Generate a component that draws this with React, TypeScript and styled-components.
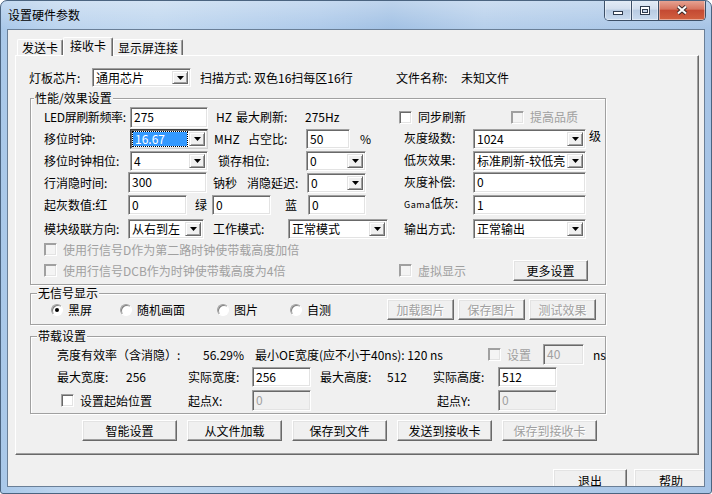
import React from "react";
import styled, { createGlobalStyle } from "styled-components";

const GlobalStyle = createGlobalStyle`
  html, body {
    margin: 0;
    padding: 0;
    background: #ffffff;
  }
  body {
    font-family: "Noto Sans CJK SC", "Liberation Sans", sans-serif;
    font-size: 12px;
    color: #000;
  }
`;

const Win = styled.div`
  width: 712px;
  height: 494px;
  box-sizing: border-box;
  border: 1px solid #4b6480;
  border-radius: 7px 7px 3px 3px;
  background: linear-gradient(180deg, rgba(255, 255, 255, 0.3), rgba(255, 255, 255, 0) 28px),
    linear-gradient(90deg, #a9c8e9 0%, #bcd4ee 8%, #c0d7ef 22%, #aecaea 45%, #a2c1e4 55%, #b6cfeb 68%, #a6c4e6 100%);
  display: flex;
  flex-direction: column;
  overflow: hidden;
`;

const TitleBar = styled.div`
  height: 28px;
  flex: none;
  display: flex;
  align-items: flex-start;
`;

const Title = styled.div`
  padding-left: 7px;
  line-height: 27px;
  font-size: 12px;
  color: #000;
`;

const CaptionGroup = styled.div`
  margin: -1px 5px 0 auto;
  display: flex;
  height: 20px;
  border: 1px solid #3d5068;
  border-top: none;
  border-radius: 0 0 5px 5px;
  overflow: hidden;
`;

const CaptionBtn = styled.div<{ $w: number; $close?: boolean }>`
  width: ${(p) => p.$w}px;
  height: 100%;
  display: flex;
  align-items: center;
  justify-content: center;
  & + & {
    border-left: 1px solid #3d5068;
  }
  background: ${(p) =>
    p.$close
      ? "linear-gradient(180deg, #e8a898 0%, #d77560 45%, #c44a33 52%, #d2613f 100%)"
      : "linear-gradient(180deg, #e4edf7 0%, #d3dfee 45%, #b8cbe2 52%, #c9dbef 100%)"};
  box-shadow: inset 0 0 0 1px rgba(255, 255, 255, 0.45);
`;

const Client = styled.div`
  margin: 0 6px;
  width: 698px;
  height: 458px;
  box-sizing: border-box;
  border: 1px solid #6a7f97;
  background: #f0f0f0;
  padding-top: 7px;
  overflow: hidden;
  display: flex;
  flex-direction: column;
`;

const TabStrip = styled.div`
  height: 18px;
  flex: none;
  display: flex;
  align-items: flex-end;
  padding-left: 9px;
`;

const Tab = styled.div<{ $w: number; $active?: boolean }>`
  position: relative;
  z-index: ${(p) => (p.$active ? 1 : 0)};
  width: ${(p) => p.$w}px;
  height: ${(p) => (p.$active ? 19 : 16)}px;
  margin-bottom: ${(p) => (p.$active ? -1 : 0)}px;
  box-sizing: border-box;
  border: 1px solid;
  border-color: #fff #696969 transparent #fff;
  border-bottom: none;
  border-radius: 2px 2px 0 0;
  box-shadow: inset -1px 0 0 #a0a0a0;
  background: #f0f0f0;
  text-align: center;
  line-height: ${(p) => (p.$active ? 16 : 15)}px;
  white-space: nowrap;
`;

const Panel = styled.div`
  margin-left: 7px;
  width: 684px;
  height: 400px;
  flex: none;
  box-sizing: border-box;
  border: 1px solid;
  border-color: #fff #696969 #696969 #fff;
  box-shadow: inset -1px -1px 0 #a0a0a0;
  display: flex;
  flex-direction: column;
`;

const Row = styled.div<{ $h: number; $mt?: number; $pl?: number; $gap?: number }>`
  display: flex;
  align-items: center;
  flex: none;
  height: ${(p) => p.$h}px;
  margin-top: ${(p) => p.$mt ?? 0}px;
  padding-left: ${(p) => p.$pl ?? 0}px;
  gap: ${(p) => p.$gap ?? 0}px;
`;

const Part = styled.div<{ $w?: number; $gap?: number }>`
  display: flex;
  align-items: center;
  height: 100%;
  flex: none;
  width: ${(p) => (p.$w ? `${p.$w}px` : "auto")};
  gap: ${(p) => p.$gap ?? 0}px;
`;

const Cell = styled.div<{ $w?: number; $pl?: number; $dim?: boolean; $lift?: number; $tight?: boolean }>`
  flex: none;
  width: ${(p) => (p.$w ? `${p.$w}px` : "auto")};
  box-sizing: border-box;
  padding-left: ${(p) => p.$pl ?? 0}px;
  line-height: 14px;
  white-space: nowrap;
  margin-top: ${(p) => -(p.$lift ?? 0) * 2}px;
  letter-spacing: ${(p) => (p.$tight ? "-0.4px" : "normal")};
  color: ${(p) => (p.$dim ? "#a0a0a0" : "#000")};
`;

const Small = styled.span`
  font-size: 9px;
  letter-spacing: 0.5px;
`;

const Group = styled.div<{ $mt: number; $pb: number }>`
  margin: ${(p) => p.$mt}px 0 0 14px;
  width: 576px;
  box-sizing: border-box;
  border: 1px solid #a0a0a0;
  box-shadow: inset 1px 1px 0 #fff, 1px 1px 0 #fff;
  padding-bottom: ${(p) => p.$pb}px;
  display: flex;
  flex-direction: column;
`;

const GroupTitle = styled.div<{ $x: number }>`
  align-self: flex-start;
  height: 14px;
  line-height: 14px;
  margin: -8px 0 0 ${(p) => p.$x}px;
  padding: 0 1px;
  background: #f0f0f0;
  white-space: nowrap;
`;

const Field = styled.div<{ $w: number; $h?: number; $dim?: boolean }>`
  flex: none;
  width: ${(p) => p.$w}px;
  height: ${(p) => p.$h ?? 21}px;
  box-sizing: border-box;
  border: 1px solid;
  border-color: #a0a0a0 #fff #fff #a0a0a0;
  box-shadow: inset 1px 1px 0 #696969, inset -1px -1px 0 #e3e3e3;
  background: ${(p) => (p.$dim ? "#f0f0f0" : "#fff")};
  color: ${(p) => (p.$dim ? "#a0a0a0" : "#000")};
  padding: 2px 0 0 3px;
  line-height: 14px;
  white-space: nowrap;
  overflow: hidden;
`;

const ComboBox = styled.div<{ $w: number; $h?: number; $focus?: boolean }>`
  flex: none;
  width: ${(p) => p.$w}px;
  height: ${(p) => p.$h ?? 20}px;
  box-sizing: border-box;
  display: flex;
  background: #fff;
  border: 1px solid;
  border-color: ${(p) => (p.$focus ? "#404040 #d0d0d0 #d0d0d0 #404040" : "#a0a0a0 #fff #fff #a0a0a0")};
  box-shadow: inset 1px 1px 0 #696969, inset -1px -1px 0 #e3e3e3;
  padding: 1px 2px 1px 1px;
`;

const ComboValue = styled.div<{ $sel?: boolean }>`
  flex: 1;
  min-width: 0;
  display: flex;
  align-items: center;
  padding-left: 2px;
  margin: ${(p) => (p.$sel ? "1px 2px 1px 1px" : "0")};
  white-space: nowrap;
  line-height: 12px;
  background: ${(p) => (p.$sel ? "#3399ff" : "transparent")};
  color: ${(p) => (p.$sel ? "#fff" : "#000")};
  outline: ${(p) => (p.$sel ? "1px dotted #000" : "none")};
`;

const ComboArrow = styled.div`
  width: 16px;
  flex: none;
  margin: 1px 0;
  box-sizing: border-box;
  background: #f0f0f0;
  border: 1px solid;
  border-color: #e3e3e3 #696969 #696969 #e3e3e3;
  box-shadow: inset 1px 1px 0 #fff, inset -1px -1px 0 #a0a0a0;
  display: flex;
  align-items: center;
  justify-content: center;
`;

const CheckWrap = styled.div<{ $dim?: boolean }>`
  display: flex;
  align-items: center;
  gap: 6px;
  white-space: nowrap;
  line-height: 14px;
  color: ${(p) => (p.$dim ? "#a0a0a0" : "#000")};
`;

const CheckBox = styled.span<{ $dim?: boolean }>`
  width: 13px;
  height: 13px;
  flex: none;
  box-sizing: border-box;
  border: 1px solid;
  border-color: #a0a0a0 #fff #fff #a0a0a0;
  box-shadow: inset 1px 1px 0 ${(p) => (p.$dim ? "#a0a0a0" : "#696969")}, inset -1px -1px 0 #e3e3e3;
  background: ${(p) => (p.$dim ? "#f4f4f4" : "#fff")};
`;

const RadioDot = styled.span<{ $on?: boolean }>`
  width: 12px;
  height: 12px;
  flex: none;
  box-sizing: border-box;
  border-radius: 50%;
  border: 1px solid;
  border-color: #a0a0a0 #fff #fff #a0a0a0;
  box-shadow: inset 1px 1px 0 #808080;
  background: #fff;
  display: flex;
  align-items: center;
  justify-content: center;
  &::after {
    content: "";
    width: 4px;
    height: 4px;
    border-radius: 50%;
    background: ${(p) => (p.$on ? "#000" : "transparent")};
  }
`;

const RadioWrap = styled.div`
  display: flex;
  align-items: center;
  gap: 5px;
  white-space: nowrap;
  line-height: 14px;
`;

const Btn = styled.button<{ $w: number; $h?: number; $dim?: boolean }>`
  flex: none;
  width: ${(p) => p.$w}px;
  height: ${(p) => p.$h ?? 21}px;
  box-sizing: border-box;
  padding: 0;
  font: inherit;
  font-size: 12px;
  line-height: 14px;
  background: #f0f0f0;
  border: 1px solid;
  border-color: #fff #696969 #696969 #fff;
  box-shadow: inset -1px -1px 0 #a0a0a0, inset 1px 1px 0 #e3e3e3;
  color: ${(p) => (p.$dim ? "#a0a0a0" : "#000")};
  text-shadow: ${(p) => (p.$dim ? "1px 1px 0 #fff" : "none")};
  white-space: nowrap;
`;

const BottomBar = styled.div`
  display: flex;
  gap: 7px;
  padding-left: 545px;
  margin-top: 14px;
  flex: none;
`;

const Arrow = () => (
  <svg width="7" height="4" viewBox="0 0 7 4">
    <path d="M0 0h7L3.5 4z" fill="#000" />
  </svg>
);

const Combo = ({ w, h, value, focus }: { w: number; h?: number; value: string; focus?: boolean }) => (
  <ComboBox $w={w} $h={h} $focus={focus}>
    <ComboValue $sel={focus}>{value}</ComboValue>
    <ComboArrow>
      <Arrow />
    </ComboArrow>
  </ComboBox>
);

const Check = ({ label, dim }: { label: string; dim?: boolean }) => (
  <CheckWrap $dim={dim}>
    <CheckBox $dim={dim} />
    {label}
  </CheckWrap>
);

const Radio = ({ label, on }: { label: string; on?: boolean }) => (
  <RadioWrap>
    <RadioDot $on={on} />
    {label}
  </RadioWrap>
);

export default function App() {
  return (
    <>
      <GlobalStyle />
      <Win>
        <TitleBar>
          <Title>设置硬件参数</Title>
          <CaptionGroup>
            <CaptionBtn $w={26}>
              <svg width="12" height="12" viewBox="0 0 12 12">
                <rect x="1.5" y="7.5" width="9" height="3" fill="#fff" stroke="#2f3c4f" />
              </svg>
            </CaptionBtn>
            <CaptionBtn $w={26}>
              <svg width="12" height="11" viewBox="0 0 12 11">
                <rect x="1.5" y="1.5" width="9" height="8" fill="#fff" stroke="#2f3c4f" />
                <rect x="3.5" y="4.5" width="5" height="3" fill="#c7d6ea" stroke="#2f3c4f" />
              </svg>
            </CaptionBtn>
            <CaptionBtn $w={46} $close>
              <svg width="14" height="12" viewBox="0 0 14 12">
                <path d="M3 2.5l8 7M11 2.5l-8 7" stroke="#3a2a2a" strokeWidth="4" />
                <path d="M3 2.5l8 7M11 2.5l-8 7" stroke="#fff" strokeWidth="2" />
              </svg>
            </CaptionBtn>
          </CaptionGroup>
        </TitleBar>

        <Client>
          <TabStrip>
            <Tab $w={46}>发送卡</Tab>
            <Tab $w={50} $active>
              接收卡
            </Tab>
            <Tab $w={70}>显示屏连接</Tab>
          </TabStrip>

          <Panel>
            <Row $h={19} $mt={12} $pl={13}>
              <Cell $w={63}>灯板芯片:</Cell>
              <Combo w={99} h={19} value="通用芯片" />
              <Cell $w={205} $pl={9}>
                扫描方式: 双色16扫每区16行
              </Cell>
              <Cell $w={65}>文件名称:</Cell>
              <Cell>未知文件</Cell>
            </Row>

            <Group $mt={11} $pb={2}>
              <GroupTitle $x={3}>性能/效果设置</GroupTitle>
              <Row $h={22} $mt={1} $pl={13}>
                <Part $w={355}>
                  <Cell $w={86} $tight>
                    LED屏刷新频率:
                  </Cell>
                  <Field $w={78}>275</Field>
                  <Cell $w={28} $pl={8}>
                    HZ
                  </Cell>
                  <Cell $w={69}>最大刷新:</Cell>
                  <Cell>275Hz</Cell>
                </Part>
                <Part>
                  <Cell $w={112}>
                    <Check label="同步刷新" />
                  </Cell>
                  <Check label="提高品质" dim />
                </Part>
              </Row>
              <Row $h={20} $mt={1} $pl={13}>
                <Part $w={355}>
                  <Cell $w={86}>移位时钟:</Cell>
                  <Combo w={78} value="16.67" focus />
                  <Cell $w={40} $pl={6}>
                    MHZ
                  </Cell>
                  <Cell $w={58}>占空比:</Cell>
                  <Field $w={44} $h={20}>
                    50
                  </Field>
                  <Cell $pl={10}>%</Cell>
                </Part>
                <Part>
                  <Cell $w={74} $pl={5} $lift={1}>
                    灰度级数:
                  </Cell>
                  <Combo w={113} value="1024" />
                  <Cell $pl={3} $lift={3}>
                    级
                  </Cell>
                </Part>
              </Row>
              <Row $h={20} $mt={2} $pl={13}>
                <Part $w={355}>
                  <Cell $w={86}>移位时钟相位:</Cell>
                  <Combo w={78} value="4" />
                  <Cell $w={10} />
                  <Cell $w={88}>锁存相位:</Cell>
                  <Combo w={60} value="0" />
                </Part>
                <Part>
                  <Cell $w={74} $pl={5} $lift={1}>
                    低灰效果:
                  </Cell>
                  <Combo w={113} value="标准刷新-较低亮" />
                </Part>
              </Row>
              <Row $h={21} $mt={1} $pl={13}>
                <Part $w={355}>
                  <Cell $w={84}>行消隐时间:</Cell>
                  <Field $w={79}>300</Field>
                  <Cell $w={40} $pl={6}>
                    钠秒
                  </Cell>
                  <Cell $w={60}>消隐延迟:</Cell>
                  <Combo w={59} value="0" />
                </Part>
                <Part>
                  <Cell $w={74} $pl={5} $lift={1}>
                    灰度补偿:
                  </Cell>
                  <Field $w={113}>0</Field>
                </Part>
              </Row>
              <Row $h={20} $mt={2} $pl={13}>
                <Part $w={355}>
                  <Cell $w={84}>起灰数值:红</Cell>
                  <Field $w={59} $h={20}>
                    0
                  </Field>
                  <Cell $w={25} $pl={8}>
                    绿
                  </Cell>
                  <Field $w={59} $h={20}>
                    0
                  </Field>
                  <Cell $w={37} $pl={14}>
                    蓝
                  </Cell>
                  <Field $w={58} $h={20}>
                    0
                  </Field>
                </Part>
                <Part>
                  <Cell $w={74} $pl={5} $lift={1}>
                    <Small>Gama</Small>低灰:
                  </Cell>
                  <Field $w={113} $h={20}>
                    1
                  </Field>
                </Part>
              </Row>
              <Row $h={20} $mt={4} $pl={13}>
                <Part $w={355}>
                  <Cell $w={84}>模块级联方向:</Cell>
                  <Combo w={76} value="从右到左" />
                  <Cell $w={84} $pl={9}>
                    工作模式:
                  </Cell>
                  <Combo w={100} value="正常模式" />
                </Part>
                <Part>
                  <Cell $w={74} $pl={5}>
                    输出方式:
                  </Cell>
                  <Combo w={113} value="正常输出" />
                </Part>
              </Row>
              <Row $h={19} $mt={1} $pl={13}>
                <Check label="使用行信号D作为第二路时钟使带载高度加倍" dim />
              </Row>
              <Row $h={23} $pl={13}>
                <Part $w={355}>
                  <Check label="使用行信号DCB作为时钟使带载高度为4倍" dim />
                </Part>
                <Part>
                  <Cell $w={114}>
                    <Check label="虚拟显示" dim />
                  </Cell>
                  <Btn $w={75}>更多设置</Btn>
                </Part>
              </Row>
            </Group>

            <Group $mt={8} $pb={4}>
              <GroupTitle $x={6}>无信号显示</GroupTitle>
              <Row $h={21} $mt={-1} $pl={20}>
                <Cell $w={69}>
                  <Radio label="黑屏" on />
                </Cell>
                <Cell $w={97}>
                  <Radio label="随机画面" />
                </Cell>
                <Cell $w={73}>
                  <Radio label="图片" />
                </Cell>
                <Cell $w={97}>
                  <Radio label="自测" />
                </Cell>
                <Part $gap={4}>
                  <Btn $w={67} $dim>
                    加载图片
                  </Btn>
                  <Btn $w={67} $dim>
                    保存图片
                  </Btn>
                  <Btn $w={67} $dim>
                    测试效果
                  </Btn>
                </Part>
              </Row>
            </Group>

            <Group $mt={11} $pb={2}>
              <GroupTitle $x={6}>带载设置</GroupTitle>
              <Row $h={21} $mt={1}>
                <Cell $w={172} $pl={26}>
                  亮度有效率（含消隐）:
                </Cell>
                <Cell $w={52}>56.29%</Cell>
                <Cell $w={233}>最小OE宽度(应不小于40ns): 120 ns</Cell>
                <Cell $w={55}>
                  <Check label="设置" dim />
                </Cell>
                <Field $w={41} $dim>
                  40
                </Field>
                <Cell $pl={9}>ns</Cell>
              </Row>
              <Row $h={20} $mt={2}>
                <Cell $w={95} $pl={26}>
                  最大宽度:
                </Cell>
                <Cell $w={62}>256</Cell>
                <Cell $w={64}>实际宽度:</Cell>
                <Field $w={59} $h={20}>
                  256
                </Field>
                <Cell $w={76} $pl={9}>
                  最大高度:
                </Cell>
                <Cell $w={46}>512</Cell>
                <Cell $w={65}>实际高度:</Cell>
                <Field $w={59} $h={20}>
                  512
                </Field>
              </Row>
              <Row $h={21} $mt={3}>
                <Cell $w={157} $pl={30}>
                  <Check label="设置起始位置" />
                </Cell>
                <Cell $w={64}>起点X:</Cell>
                <Field $w={59} $dim>
                  0
                </Field>
                <Cell $w={126} />
                <Cell $w={61}>起点Y:</Cell>
                <Field $w={59} $dim>
                  0
                </Field>
              </Row>
            </Group>

            <Row $h={21} $mt={6} $pl={66} $gap={10}>
              <Btn $w={95}>智能设置</Btn>
              <Btn $w={95}>从文件加载</Btn>
              <Btn $w={95}>保存到文件</Btn>
              <Btn $w={95}>发送到接收卡</Btn>
              <Btn $w={95} $dim>
                保存到接收卡
              </Btn>
            </Row>
          </Panel>

          <BottomBar>
            <Btn $w={74} $h={23}>
              退出
            </Btn>
            <Btn $w={74} $h={23}>
              帮助
            </Btn>
          </BottomBar>
        </Client>
      </Win>
    </>
  );
}
